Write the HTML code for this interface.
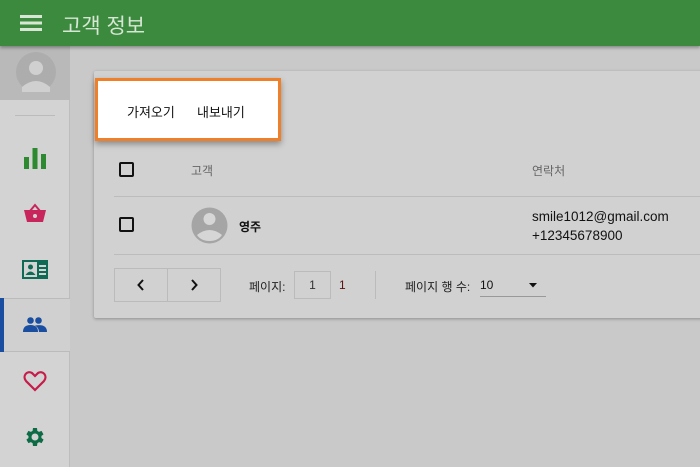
<!DOCTYPE html><html><head><meta charset="utf-8"><style>
*{box-sizing:border-box;margin:0;padding:0}
body{width:700px;height:467px;overflow:hidden;background:#c9c9c9;font-family:"Liberation Sans","Noto Sans CJK KR",sans-serif;position:relative}
.hdr{position:absolute;left:0;top:0;width:700px;height:46px;background:#3b8a3e;box-shadow:0 2px 3px rgba(0,0,0,.3);z-index:3}
.hdr .t{position:absolute;left:62px;top:10px;font-size:21px;color:#d8e6d5}
.side{position:absolute;left:0;top:46px;width:70px;height:421px;background:#d3d3d3;border-right:1px solid #bdbdbd}
.av{position:absolute;left:0;top:0;width:70px;height:54px;background:#b9b9b9;overflow:hidden}
.ic{position:absolute;left:0;width:70px;height:40px;display:flex;align-items:center;justify-content:center}
.card{position:absolute;left:94px;top:71px;width:620px;height:247px;background:#d1d1d1;box-shadow:0 1px 3px rgba(0,0,0,.3);border-radius:2px}
.line{position:absolute;left:20px;right:0;height:1px;background:#bcbcbd}
.cb{position:absolute;width:15px;height:15px;border:2px solid #111;border-radius:2px}
.pop{position:absolute;left:95px;top:78px;width:186px;height:63px;background:#fff;border:3px solid #f07f2a;box-shadow:0 3px 6px rgba(0,0,0,.35);z-index:4;font-size:13px;color:#111}
</style></head><body>
<div class="hdr"><svg style="position:absolute;left:20px;top:15px" width="22" height="16"><rect y="0" width="22" height="3" fill="#d8e6d5"/><rect y="6.5" width="22" height="3" fill="#d8e6d5"/><rect y="13" width="22" height="3" fill="#d8e6d5"/></svg><div class="t">고객 정보</div></div>
<div class="side">
<div class="av"><svg width="70" height="54"><circle cx="36" cy="26" r="20" fill="#adadad"/><circle cx="36" cy="22" r="7" fill="#d0d0d0"/><path d="M22 41 q14-12 28 0 v5 h-28z" fill="#d0d0d0"/></svg></div>
<div style="position:absolute;left:15px;top:69px;width:40px;height:1px;background:#bbb"></div>
<div class="ic" style="top:92px"><svg width="24" height="24"><rect x="1" y="11" width="5" height="12" fill="#2e8a30"/><rect x="9.5" y="2" width="5" height="21" fill="#2e8a30"/><rect x="18" y="8" width="5" height="15" fill="#2e8a30"/></svg></div>
<div class="ic" style="top:147px"><svg width="24" height="22"><path d="M7 9 L12 3 L17 9" stroke="#c8255d" stroke-width="2" fill="none"/><path d="M1 8 H23 L20 20 H4Z" fill="#c8255d"/><circle cx="12" cy="14" r="2" fill="#d3d3d3"/></svg></div>
<div class="ic" style="top:204px"><svg width="26" height="20"><rect width="26" height="19" fill="#0f6a55"/><rect x="2" y="2" width="13" height="15" fill="#d3d3d3"/><circle cx="8.5" cy="7" r="2.5" fill="#0f6a55"/><path d="M3.5 15 q5-7 10 0z" fill="#0f6a55"/><rect x="17" y="5" width="7" height="2" fill="#d3d3d3"/><rect x="17" y="9" width="7" height="2" fill="#d3d3d3"/><rect x="17" y="13" width="7" height="2" fill="#d3d3d3"/></svg></div>
<div style="position:absolute;left:0;top:252px;width:70px;height:54px;background:#d0d0d0;border-top:1px solid #bbb;border-bottom:1px solid #bbb"></div>
<div style="position:absolute;left:0;top:252px;width:4px;height:54px;background:#1a4ea0"></div>
<div class="ic" style="top:259px"><svg width="24" height="16"><circle cx="7.5" cy="3.5" r="3.3" fill="#1a4ea0"/><circle cx="15.5" cy="3.5" r="3.3" fill="#1a4ea0"/><path d="M0 15 q0-7 7.5-7 q7.5 0 7.5 7z" fill="#1a4ea0"/><path d="M12 8.5 q12-2 12 6.5 h-8 q0-4-4-6.5z" fill="#1a4ea0"/></svg></div>
<div class="ic" style="top:315px"><svg width="24" height="22"><path d="M12 20 L3 11 C-1 6 4 0 9 3 L12 6 L15 3 C20 0 25 6 21 11Z" fill="none" stroke="#c51c4a" stroke-width="2.2"/></svg></div>
<div class="ic" style="top:371px"><svg width="24" height="24" viewBox="0 0 24 24"><path fill="#0d6b45" d="M19.4 13a7.5 7.5 0 0 0 0-2l2.1-1.6-2-3.5-2.5 1a7.5 7.5 0 0 0-1.7-1L15 3h-4l-.4 2.9a7.5 7.5 0 0 0-1.7 1l-2.5-1-2 3.5L6.5 11a7.5 7.5 0 0 0 0 2l-2.1 1.6 2 3.5 2.5-1a7.5 7.5 0 0 0 1.7 1L11 21h4l.4-2.9a7.5 7.5 0 0 0 1.7-1l2.5 1 2-3.5zM13 15.5a3.5 3.5 0 1 1 0-7 3.5 3.5 0 0 1 0 7z" transform="translate(-1 0)"/></svg></div>
</div>
<div class="card">
<div class="cb" style="left:25px;top:91px"></div>
<div style="position:absolute;left:97px;top:91px;font-size:12px;color:#666">고객</div>
<div style="position:absolute;left:438px;top:91px;font-size:12px;color:#666">연락처</div>
<div class="line" style="top:125px"></div>
<div class="cb" style="left:25px;top:146px"></div>
<svg style="position:absolute;left:97px;top:136px" width="37" height="37"><circle cx="18.5" cy="18.5" r="18" fill="#a5a5a5"/><circle cx="18.5" cy="12" r="6" fill="#d6d6d6"/><path d="M6 28 q12.5-10 25 0 q-4 6-12.5 6 t-12.5-6z" fill="#d6d6d6"/></svg>
<div style="position:absolute;left:145px;top:147px;font-size:12px;font-weight:bold;color:#111">영주</div>
<div style="position:absolute;left:438px;top:136px;font-size:13.5px;color:#111;line-height:19px">smile1012@gmail.com<br>+12345678900</div>
<div class="line" style="top:183px"></div>
<div style="position:absolute;left:20px;top:197px;width:107px;height:34px;border:1px solid #bbb"><div style="position:absolute;left:52px;top:0;width:1px;height:32px;background:#bbb"></div>
<svg style="position:absolute;left:22px;top:10px" width="8" height="12"><path d="M6 1 L1.5 6 L6 11" stroke="#111" stroke-width="2" fill="none"/></svg>
<svg style="position:absolute;left:75px;top:10px" width="8" height="12"><path d="M2 1 L6.5 6 L2 11" stroke="#111" stroke-width="2" fill="none"/></svg></div>
<div style="position:absolute;left:155px;top:207px;font-size:12px;color:#222">페이지:</div>
<div style="position:absolute;left:200px;top:200px;width:37px;height:28px;border:1px solid #bbb;font-size:12px;text-align:center;line-height:26px;color:#333">1</div>
<div style="position:absolute;left:245px;top:207px;font-size:12px;color:#5a1010">1</div>
<div style="position:absolute;left:281px;top:200px;width:1px;height:28px;background:#bbb"></div>
<div style="position:absolute;left:311px;top:207px;font-size:12px;color:#222">페이지 행 수:</div>
<div style="position:absolute;left:386px;top:207px;font-size:12px;color:#111">10</div>
<div style="position:absolute;left:386px;top:225px;width:66px;height:1px;background:#999"></div>
<svg style="position:absolute;left:435px;top:212px" width="8" height="5"><path d="M0 0H8L4 4.5z" fill="#111"/></svg>
</div>
<div class="pop"><span style="position:absolute;left:29px;top:21px">가져오기</span><span style="position:absolute;left:99px;top:21px">내보내기</span></div>
</body></html>
